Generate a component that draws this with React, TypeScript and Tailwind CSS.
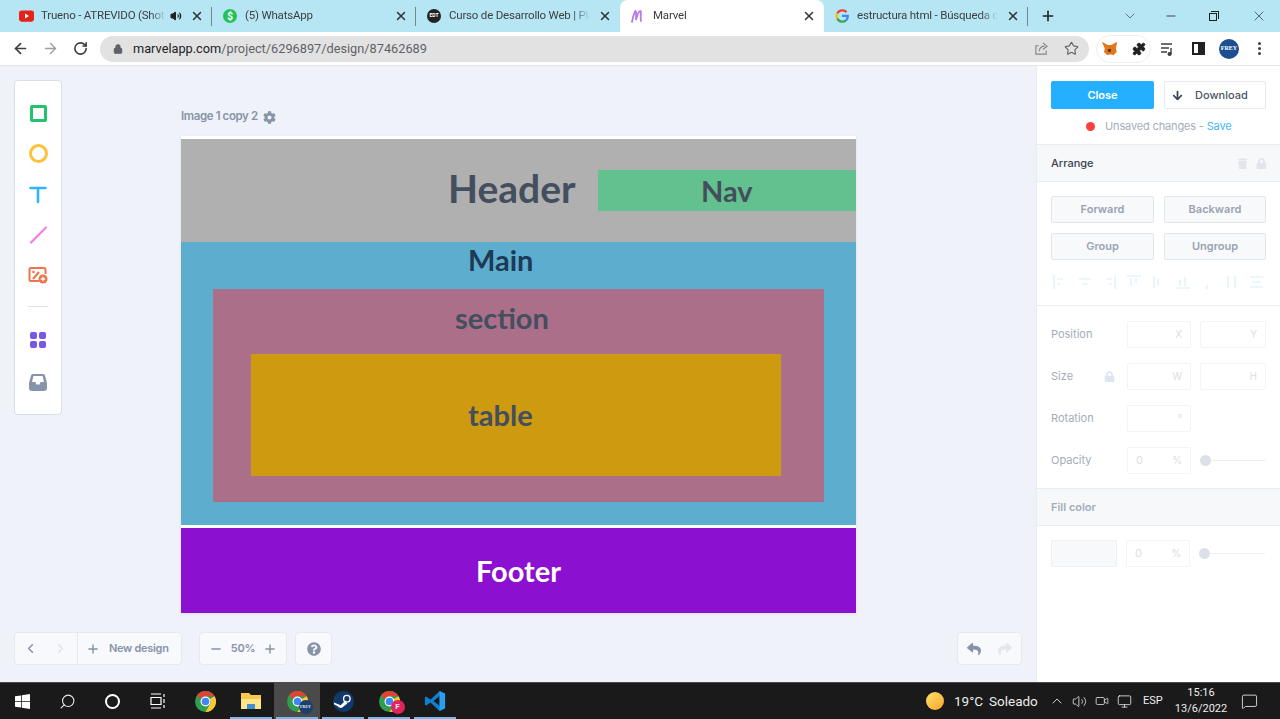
import React from 'react';
import {
    ArrowLeft, ArrowRight, RotateCw, Lock, Star, Puzzle, X, Plus, Minus, ChevronDown,
    ChevronLeft, ChevronRight, ChevronUp, Search, Volume2, Monitor, Video, MessageSquare,
} from 'lucide-react';
import { FaArrowDown, FaCog, FaLock, FaQuestionCircle, FaReply, FaShare, FaTrash } from 'react-icons/fa';

const chromeFont = "font-['Roboto',sans-serif]";
const appFont = "font-['Inter',sans-serif]";

function ChromeLogo({ size = 32, badge }: { size?: number; badge?: React.ReactNode }) {
    return (
        <div className="relative" style={{ width: size, height: size }}>
            <svg viewBox="0 0 32 32" width={size} height={size}>
                <circle cx="16" cy="16" r="16" fill="#2f9e4f" />
                <path d="M16 0a16 16 0 0 1 13.9 8H16a8 8 0 0 0-7.4 5L3.2 6.2A16 16 0 0 1 16 0z" fill="#db4437" />
                <path d="M29.9 8A16 16 0 0 1 16 32l6.6-11.6A8 8 0 0 0 22.6 12z" fill="#fcc934" />
                <circle cx="16" cy="16" r="7.6" fill="#fff" />
                <circle cx="16" cy="16" r="5.8" fill="#4285f4" />
            </svg>
            {badge}
        </div>
    );
}

function Tab({ icon, title, active, extra, last }: { icon: React.ReactNode; title: string; active?: boolean; extra?: React.ReactNode; last?: boolean }) {
    return (
        <div className={`relative flex h-full w-[204px] shrink-0 items-center pl-[10px] pr-[8px] ${active ? 'rounded-t-lg bg-white' : ''}`}>
            <div className="flex h-4 w-4 shrink-0 items-center justify-center">{icon}</div>
            <span className="ml-[7px] min-w-0 flex-1 overflow-hidden whitespace-nowrap text-[11.5px] tracking-[-0.2px] text-[#3c4043] [mask-image:linear-gradient(to_right,black_88%,transparent)]">{title}</span>
            {extra}
            <X className="ml-[8px] h-[14px] w-[14px] shrink-0 text-[#33363a]" strokeWidth={2.6} />
            {!active && !last && <div className="absolute right-0 top-[7px] h-[19px] w-px bg-[#6f8790]" />}
        </div>
    );
}

function Toolbar() {
    return (
        <div className="flex h-[34px] items-center border-b border-[#e3e5e8] bg-white pl-[12px]">
            <ArrowLeft className="h-[17px] w-[17px] text-[#3c4043]" strokeWidth={2.4} />
            <ArrowRight className="ml-[13px] h-[17px] w-[17px] text-[#9aa0a6]" strokeWidth={2} />
            <RotateCw className="ml-[14px] h-[15px] w-[15px] text-[#3c4043]" strokeWidth={2.6} />
            <div className="ml-[12px] flex h-[26px] w-[989px] items-center rounded-full bg-[#e2e2e2] pl-[13px] pr-[10px]">
                <Lock className="h-[10px] w-[10px] fill-[#5f6368] text-[#5f6368]" strokeWidth={2.5} />
                <span className="ml-[10px] text-[12.75px] text-[#5f6368]">
                    <span className="text-[#202124]">marvelapp.com</span>/project/6296897/design/87462689
                </span>
                {/* share box with a curved arrow */}
                <svg viewBox="0 0 16 16" className="ml-auto h-[15px] w-[15px] text-[#80868b]" fill="none" stroke="currentColor" strokeWidth="1.2">
                    <path d="M13 10v4H2V5h3" />
                    <path d="M5.5 11c.4-3.6 3-5.5 6-5.5M9.5 2l4.5 3.5L9.5 9" />
                </svg>
                <Star className="ml-[15px] h-[15px] w-[15px] text-[#5f6368]" strokeWidth={1.8} />
            </div>
            <div className="ml-[7px] flex h-[28px] w-[55px] items-center justify-between rounded-full border border-[#eceef0] px-[4px]">
                <svg viewBox="0 0 20 20" className="h-[17px] w-[17px]">
                    <path d="M1 2l7 4h4l7-4-1.5 8 1 4-4 4-2-1h-3l-2 1-4-4 1-4z" fill="#e2761b" />
                    <path d="M8 11h4l-1 3H9z" fill="#3a2a1c" />
                </svg>
                <Puzzle className="h-[14px] w-[14px] fill-[#202124] text-[#202124]" strokeWidth={1.5} />
            </div>
            <svg viewBox="0 0 16 16" className="ml-[9px] h-4 w-4 text-[#3c4043]" fill="none" stroke="currentColor" strokeWidth="1.4">
                <path d="M1 3h11M1 7h8M1 11h6" />
                <path d="M11 7v6" />
                <circle cx="9.6" cy="13" r="1.4" fill="currentColor" />
            </svg>
            <div className="ml-[16px] flex h-[13px] w-[13px] justify-end border-2 border-[#202124]">
                <div className="h-full w-[5px] bg-[#202124]" />
            </div>
            <div className="ml-[14px] flex h-[20px] w-[20px] items-center justify-center rounded-full bg-[#1b4f91] font-['Liberation_Serif',serif] text-[6px] font-bold text-white">FREY</div>
            <div className="ml-[19px] flex flex-col gap-[2px]">
                <span className="h-[3px] w-[3px] rounded-full bg-[#3c4043]" />
                <span className="h-[3px] w-[3px] rounded-full bg-[#3c4043]" />
                <span className="h-[3px] w-[3px] rounded-full bg-[#3c4043]" />
            </div>
        </div>
    );
}

function ChromeFrame() {
    return (
        <div className={chromeFont}>
            <div className="flex h-[32px] items-center bg-[#b6e6f4] pl-[8px]">
                <Tab
                    title="Trueno - ATREVIDO (Shot"
                    icon={
                        <svg viewBox="0 0 16 12" className="h-[12px] w-[15px]">
                            <rect width="16" height="12" rx="3" fill="#e62117" />
                            <path d="M6.4 3.4L10.6 6l-4.2 2.6z" fill="#fff" />
                        </svg>
                    }
                    extra={<Volume2 className="ml-[4px] h-[12px] w-[12px] fill-[#202124] text-[#202124]" />}
                />
                <Tab
                    title="(5) WhatsApp"
                    icon={<div className="flex h-[14px] w-[14px] items-center justify-center rounded-full bg-[#25c15b] text-[10px] font-bold text-white">$</div>}
                />
                <Tab
                    title="Curso de Desarrollo Web | Pla"
                    icon={<div className="flex h-[14px] w-[14px] items-center justify-center rounded-full bg-[#222] text-[5px] font-bold text-white">EDT</div>}
                    last
                />
                <Tab
                    title="Marvel"
                    active
                    icon={
                        <svg viewBox="0 0 16 16" className="h-4 w-4" fill="none" stroke="#b57be8" strokeWidth="1.8" strokeLinecap="round">
                            <path d="M2 14C3 9 4.5 4 5.5 3 6.5 2.5 6 9 6 12 7 8 9 3 10.5 3 11.5 3 10 9 11 13" />
                        </svg>
                    }
                />
                <Tab
                    title="estructura html - Búsqueda c"
                    icon={
                        <svg viewBox="0 0 16 16" className="h-[14px] w-[14px]" fill="none" strokeWidth="2.6">
                            <path d="M13.2 3.6A6.6 6.6 0 0 0 2.6 5" stroke="#ea4335" />
                            <path d="M2.6 5a6.6 6.6 0 0 0 0 6" stroke="#fbbc05" />
                            <path d="M2.6 11a6.6 6.6 0 0 0 10 2" stroke="#34a853" />
                            <path d="M12.6 13a6.6 6.6 0 0 0 2-5.2H8" stroke="#4285f4" />
                        </svg>
                    }
                />
                <Plus className="ml-[12px] h-[16px] w-[16px] text-[#202124]" strokeWidth={2.4} />
                <div className="ml-auto flex items-center">
                    <ChevronDown className="h-[16px] w-[16px] text-[#4a5a62]" strokeWidth={1.2} />
                    <Minus className="ml-[26px] h-[14px] w-[14px] text-[#202124]" strokeWidth={1.4} />
                    <div className="relative ml-[31px] h-[10px] w-[10px]">
                        <div className="absolute bottom-0 left-0 h-[8px] w-[8px] border border-[#202124] bg-[#b6e6f4]" />
                        <div className="absolute right-0 top-0 h-[8px] w-[8px] border-r border-t border-[#202124]" />
                    </div>
                    <X className="ml-[32px] mr-[13px] h-[16px] w-[16px] text-[#33464e]" strokeWidth={1.2} />
                </div>
            </div>
            <Toolbar />
        </div>
    );
}

function ToolRail() {
    return (
        <div className="absolute left-[14px] top-[14px] flex h-[335px] w-[48px] flex-col items-center rounded border border-[#d9dee6] bg-white pt-[24px]">
            <div className="h-[17px] w-[17px] rounded-[2px] border-[3px] border-[#1fc46b]" />
            <div className="mt-[22px] h-[19px] w-[19px] rounded-full border-[3px] border-[#fdc13b]" />
            <svg viewBox="0 0 18 18" className="mt-[23px] h-[18px] w-[18px]" fill="none" stroke="#2fb5ff" strokeWidth="2.6" strokeLinecap="round">
                <path d="M1.5 2h15M9 2v14" />
            </svg>
            <svg viewBox="0 0 18 18" className="mt-[22px] h-[18px] w-[18px]" fill="none" stroke="#f57ee3" strokeWidth="2.2" strokeLinecap="round">
                <path d="M2 16.5L17 1.5" />
            </svg>
            <svg viewBox="0 0 20 18" className="mt-[22px] h-[18px] w-[20px]" fill="none">
                <path d="M11 15H3a1.5 1.5 0 0 1-1.5-1.5v-10A1.5 1.5 0 0 1 3 2h13a1.5 1.5 0 0 1 1.5 1.5V8" stroke="#f0734a" strokeWidth="2" />
                <path d="M5 13l6-7" stroke="#f0734a" strokeWidth="2" />
                <circle cx="5.5" cy="6" r="1.3" fill="#f0734a" />
                <circle cx="15" cy="13" r="4.5" fill="#f0734a" />
                <path d="M15 10.8v4.4M12.8 13h4.4" stroke="#fff" strokeWidth="1.3" />
            </svg>
            <div className="mt-[22px] h-px w-[20px] bg-[#dfe3e8]" />
            <div className="mt-[25px] grid grid-cols-2 gap-[2px]">
                <span className="h-[7px] w-[7px] rounded-[2px] bg-[#7856e8]" />
                <span className="h-[7px] w-[7px] rounded-[2px] bg-[#7856e8]" />
                <span className="h-[7px] w-[7px] rounded-[2px] bg-[#7856e8]" />
                <span className="h-[7px] w-[7px] rounded-[2px] bg-[#7856e8]" />
            </div>
            <svg viewBox="0 0 18 18" className="mt-[25px] h-[18px] w-[18px]">
                <path d="M4 1h10a2 2 0 0 1 2 1.6L18 10v5a3 3 0 0 1-3 3H3a3 3 0 0 1-3-3v-5l2-7.4A2 2 0 0 1 4 1z" fill="#8793a8" />
                <path d="M4.4 3h9.2l1.4 6h-3.4l-1 2.4H7.4L6.4 9H3z" fill="#fff" />
            </svg>
        </div>
    );
}

function Artboard() {
    const title = "font-['Lato',sans-serif] font-bold";
    return (
        <div className="w-[675px] border-t-[3px] border-white shadow-[0_1px_3px_rgba(0,0,0,0.08)]">
            <div className="flex h-[103px] items-center bg-[#afb0af] pl-[267px]">
                <span className={`${title} -mt-[6px] text-[39px] leading-[48px] text-[#434e5e]`}>Header</span>
                <div className={`${title} ml-[22px] flex h-[41px] flex-1 items-center justify-center bg-[#63c08f] text-[29px] text-[#434e5e]`}>Nav</div>
            </div>
            <div className="h-[283px] bg-[#5dadcf]">
                <div className={`${title} h-[36px] pl-[287px] text-[29px] leading-[36px] text-[#1d3a57]`}>Main</div>
                <div className="ml-[32px] mt-[11px] h-[213px] w-[611px] bg-[#ab6f8a]">
                    <div className={`${title} pl-[242px] pt-[11px] text-[29px] leading-[36px] text-[#434e5e]`}>section</div>
                    <div className={`${title} ml-[38px] mt-[18px] flex h-[122px] w-[530px] items-center bg-[#cd9a10] pl-[217px] text-[29px] text-[#434e5e]`}>table</div>
                </div>
            </div>
            <div className="h-[3px] bg-white" />
            <div className={`${title} flex h-[85px] items-center justify-center bg-[#8c10d0] text-[29px] text-white`}>Footer</div>
        </div>
    );
}

function FloatBox({ className, children }: { className: string; children: React.ReactNode }) {
    return <div className={`flex h-[33px] items-center rounded border border-[#e6e9f0] bg-[#f8f9fc] text-[#8793a8] ${className}`}>{children}</div>;
}

function Canvas() {
    return (
        <div className={`${appFont} relative min-w-0 flex-1 bg-[#eff2f8] pl-[181px] pt-[38px]`}>
            <ToolRail />
            <div className="mb-[6px] flex h-[26px] items-center text-[11.5px] font-semibold tracking-[-0.4px] text-[#8793a8]">
                Image 1 copy 2
                <FaCog className="ml-[5px] h-[13px] w-[13px]" />
            </div>
            <Artboard />

            <div className="absolute bottom-[17px] left-[14px] flex items-center">
                <FloatBox className="w-[168px]">
                    <div className="flex w-[63px] items-center justify-around self-stretch border-r border-[#e6e9f0] pr-[2px]">
                        <ChevronLeft className="h-[15px] w-[15px]" strokeWidth={2.5} />
                        <ChevronRight className="h-[15px] w-[15px] text-[#dfe3ea]" strokeWidth={2.5} />
                    </div>
                    <Plus className="ml-[8px] h-[14px] w-[14px]" strokeWidth={2.5} />
                    <span className="ml-[9px] text-[11px] font-semibold tracking-[-0.3px]">New design</span>
                </FloatBox>
                <FloatBox className="ml-[17px] w-[88px] justify-between px-[9px]">
                    <Minus className="h-[14px] w-[14px]" strokeWidth={2.5} />
                    <span className="text-[11px] font-semibold tracking-[-0.3px]">50%</span>
                    <Plus className="h-[14px] w-[14px]" strokeWidth={2.5} />
                </FloatBox>
                <FloatBox className="ml-[8px] w-[37px] justify-center">
                    <FaQuestionCircle className="h-[14px] w-[14px]" />
                </FloatBox>
            </div>
            <FloatBox className="absolute bottom-[17px] right-[14px] w-[65px] justify-center gap-[17px]">
                <FaReply className="h-[14px] w-[14px]" />
                <FaShare className="h-[14px] w-[14px] text-[#e3e6ec]" />
            </FloatBox>
        </div>
    );
}

function GhostButton({ children }: { children: React.ReactNode }) {
    return <div className="flex h-[27px] items-center justify-center rounded-[2px] border border-[#e1e5ec] bg-[#f8f9fb] text-[11px] font-semibold text-[#9aa3b3]">{children}</div>;
}

function Field({ w, label, value }: { w: string; label?: string; value?: string }) {
    return (
        <div className={`flex h-[27px] ${w} items-center justify-between rounded-[2px] border border-[#f3f4f7] px-[8px] text-[10px] text-[#dadee5]`}>
            <span className="text-[11px]">{value}</span>
            <span>{label}</span>
        </div>
    );
}

function Row({ label, children, icon }: { label: string; children?: React.ReactNode; icon?: React.ReactNode }) {
    return (
        <div className="flex h-[27px] items-center">
            <span className="w-[56px] text-[11px] text-[#a4acba]">{label}</span>
            <div className="flex w-[20px] items-center">{icon}</div>
            <div className="flex items-center gap-[9px]">{children}</div>
        </div>
    );
}

function Slider() {
    return (
        <div className="relative flex h-[12px] w-[66px] items-center">
            <div className="h-px w-full bg-[#eceef2]" />
            <div className="absolute left-0 h-[11px] w-[11px] rounded-full bg-[#dde0e6]" />
        </div>
    );
}

function AlignIcons() {
    // faded alignment icons
    const paths = [
        'M2 1v14M5 5h6M5 10h4',
        'M2 5h12M5 10h6',
        'M14 1v14M5 5h6M7 10h4',
        'M1 2h14M5 4v8M10 4v5',
        'M4 2v12M8 5v6',
        'M1 14h14M5 6v6M10 3v9',
        'M8 11v4',
        'M4 2v12M11 2v12',
        'M2 3h13M2 13h13M4 8h9',
    ];
    return (
        <div className="flex items-center gap-[8.5px] pl-[15px]">
            {paths.map((d, i) => (
                <svg key={i} viewBox="0 0 16 16" className="h-[16px] w-[16px]" fill="none" stroke="#d8eefb" strokeWidth="1.2">
                    <path d={d} />
                </svg>
            ))}
        </div>
    );
}

function SidePanel() {
    return (
        <div className={`${appFont} w-[244px] shrink-0 border-l border-[#e8ebf0] bg-white`}>
            <div className="grid grid-cols-[103px_102px] gap-x-[10px] pl-[14px] pt-[15px]">
                <div className="flex h-[28px] items-center justify-center rounded-[2px] bg-[#25b0ff] text-[11px] font-semibold text-white">Close</div>
                <div className="flex h-[28px] items-center rounded-[2px] border border-[#e6e9ef] pl-[7px] text-[11px] font-medium text-[#4b5563]">
                    <FaArrowDown className="h-[11px] w-[11px] text-[#374151]" />
                    <span className="ml-[12px]">Download</span>
                </div>
            </div>
            <div className="mt-[9px] flex h-[16px] items-center pl-[49px] text-[11px] tracking-[-0.15px] text-[#a4acba]">
                <span className="h-[9px] w-[9px] rounded-full bg-[#f9403f]" />
                <span className="ml-[10px]">Unsaved changes - <span className="text-[#45b5f5]">Save</span></span>
            </div>
            <div className="mt-[10px] flex h-[38px] items-center border-y border-[#e8ebf0] bg-[#f7f8fa] pl-[14px] pr-[13px] text-[11px] font-medium text-[#3a4452]">
                Arrange
                <FaTrash className="ml-auto h-[11px] w-[11px] text-[#e3e5ea]" />
                <FaLock className="ml-[8px] h-[11px] w-[11px] text-[#e3e5ea]" />
            </div>
            <div className="grid grid-cols-[103px_102px] gap-x-[10px] gap-y-[10px] pl-[14px] pt-[14px]">
                <GhostButton>Forward</GhostButton>
                <GhostButton>Backward</GhostButton>
                <GhostButton>Group</GhostButton>
                <GhostButton>Ungroup</GhostButton>
            </div>
            <div className="mt-[13px] flex h-[18px] items-center"><AlignIcons /></div>
            <div className="mt-[14px] flex flex-col gap-[15px] border-t border-[#e8ebf0] pl-[14px] pt-[15px]">
                <Row label="Position">
                    <Field w="w-[64px]" label="X" />
                    <Field w="w-[66px]" label="Y" />
                </Row>
                <Row label="Size" icon={<FaLock className="-ml-[3px] h-[11px] w-[11px] text-[#dfe5f0]" />}>
                    <Field w="w-[64px]" label="W" />
                    <Field w="w-[66px]" label="H" />
                </Row>
                <Row label="Rotation">
                    <Field w="w-[64px]" label="°" />
                </Row>
                <Row label="Opacity">
                    <Field w="w-[64px]" value="0" label="%" />
                    <Slider />
                </Row>
            </div>
            <div className="mt-[14px] flex h-[38px] items-center border-y border-[#e8ebf0] bg-[#f7f8fa] pl-[14px] text-[11px] font-semibold text-[#a4acba]">Fill color</div>
            <div className="flex items-center gap-[9px] pl-[14px] pt-[14px]">
                <div className="h-[27px] w-[66px] rounded-[2px] border border-[#eef0f4] bg-[#f8f9fb]" />
                <Field w="w-[64px]" value="0" label="%" />
                <Slider />
            </div>
        </div>
    );
}

function TaskIcon({ children, active, underline = true }: { children: React.ReactNode; active?: boolean; underline?: boolean }) {
    return (
        <div className={`relative flex h-full w-[46px] items-center justify-center ${active ? 'bg-[#4a4a4a]' : ''}`}>
            {children}
            {underline && <div className="absolute bottom-0 left-[2px] right-[2px] h-[2px] bg-[#76b9ed]" />}
        </div>
    );
}

function Taskbar() {
    return (
        <div className={`${chromeFont} flex h-[37px] items-center border-t border-[#4b4b4b] bg-[#1a1a1a] text-[#ececec]`}>
            <div className="flex w-[45px] items-center justify-center">
                <svg viewBox="0 0 16 16" className="h-[15px] w-[15px]" fill="#fff">
                    <path d="M0 2.4l6.5-.9v6.1H0zM7.3 1.4L16 0v7.6H7.3zM0 8.4h6.5v6.1L0 13.6zM7.3 8.4H16V16l-8.7-1.3z" />
                </svg>
            </div>
            <div className="flex w-[45px] items-center justify-center">
                <Search className="h-[17px] w-[17px] -scale-x-100" strokeWidth={1.5} />
            </div>
            <div className="flex w-[45px] items-center justify-center">
                <div className="h-[15px] w-[15px] rounded-full border-[2px] border-white" />
            </div>
            <div className="flex w-[45px] items-center justify-center">
                <svg viewBox="0 0 16 16" className="h-[16px] w-[16px]" fill="none" stroke="#fff" strokeWidth="1.2">
                    <path d="M1 1h10M1 15h10M1 4.5h10v7H1zM14 1v3M14 6v4M14 12v3" />
                </svg>
            </div>
            <div className="ml-[2px] flex h-full items-center">
                <TaskIcon underline={false}><ChromeLogo size={21} /></TaskIcon>
                <TaskIcon>
                    <svg viewBox="0 0 22 20" className="h-[20px] w-[22px]">
                        <path d="M1 2h8l2 2h10v14H1z" fill="#f6c94c" />
                        <rect x="1" y="8" width="20" height="10" fill="#fde58a" />
                        <rect x="7" y="13" width="8" height="5" fill="#3f8fd2" />
                    </svg>
                </TaskIcon>
                <TaskIcon active>
                    <ChromeLogo
                        size={21}
                        badge={<div className="absolute -bottom-[2px] -right-[5px] flex h-[14px] w-[14px] items-center justify-center rounded-full bg-[#1b3f6e] font-['Liberation_Serif',serif] text-[4px] font-bold">FREY</div>}
                    />
                </TaskIcon>
                <TaskIcon>
                    <svg viewBox="0 0 22 22" className="h-[21px] w-[21px]">
                        <circle cx="11" cy="11" r="11" fill="#12396b" />
                        <circle cx="14.5" cy="8" r="3.4" fill="none" stroke="#fff" strokeWidth="1.4" />
                        <path d="M1 12l7 3 5-5 2 3-5 4a3.4 3.4 0 0 1-5-1L1 14z" fill="#fff" />
                    </svg>
                </TaskIcon>
                <TaskIcon>
                    <ChromeLogo
                        size={21}
                        badge={<div className="absolute -bottom-[2px] -right-[5px] flex h-[14px] w-[14px] items-center justify-center rounded-full bg-[#e0245e] text-[8px] font-bold">F</div>}
                    />
                </TaskIcon>
                <TaskIcon>
                    <svg viewBox="0 0 24 24" className="h-[22px] w-[22px]">
                        <path d="M17 1l6 3v16l-6 3-10-9.5L2.5 17 1 16v-8l1.5-1 4.5 3.5z" fill="#0f7fcf" />
                        <path d="M17 6.5L10.5 12l6.5 5.5z" fill="#1a1a1a" />
                        <path d="M17 1l6 3v16l-6 3z" fill="#29a0ef" />
                    </svg>
                </TaskIcon>
            </div>
            <div className="ml-auto flex items-center">
                <div className="h-[18px] w-[18px] rounded-full bg-gradient-to-br from-[#fde26a] to-[#f5a623]" />
                <span className="ml-[10px] w-[27px] whitespace-nowrap text-[13.5px]">19°C</span>
                <span className="ml-[8px] w-[47px] text-[13.5px]">Soleado</span>
                <ChevronUp className="ml-[13px] h-[16px] w-[16px]" strokeWidth={1.3} />
                <Volume2 className="ml-[7px] h-[15px] w-[15px]" strokeWidth={1.3} />
                <Video className="ml-[8px] h-[14px] w-[14px]" strokeWidth={1.3} />
                <Monitor className="ml-[8px] h-[15px] w-[15px]" strokeWidth={1.3} />
                <span className="ml-[11px] w-[20px] text-[11px]">ESP</span>
                <div className="ml-[13px] flex w-[50px] flex-col items-center text-[11px] leading-[16px]">
                    <span>15:16</span>
                    <span>13/6/2022</span>
                </div>
                <MessageSquare className="ml-[15px] mr-[22px] h-[17px] w-[17px]" strokeWidth={1.2} />
            </div>
        </div>
    );
}

export default function App() {
    return (
        <div className="flex h-[719px] w-[1280px] flex-col overflow-hidden">
            <ChromeFrame />
            <div className="flex min-h-0 flex-1">
                <Canvas />
                <SidePanel />
            </div>
            <Taskbar />
        </div>
    );
}
